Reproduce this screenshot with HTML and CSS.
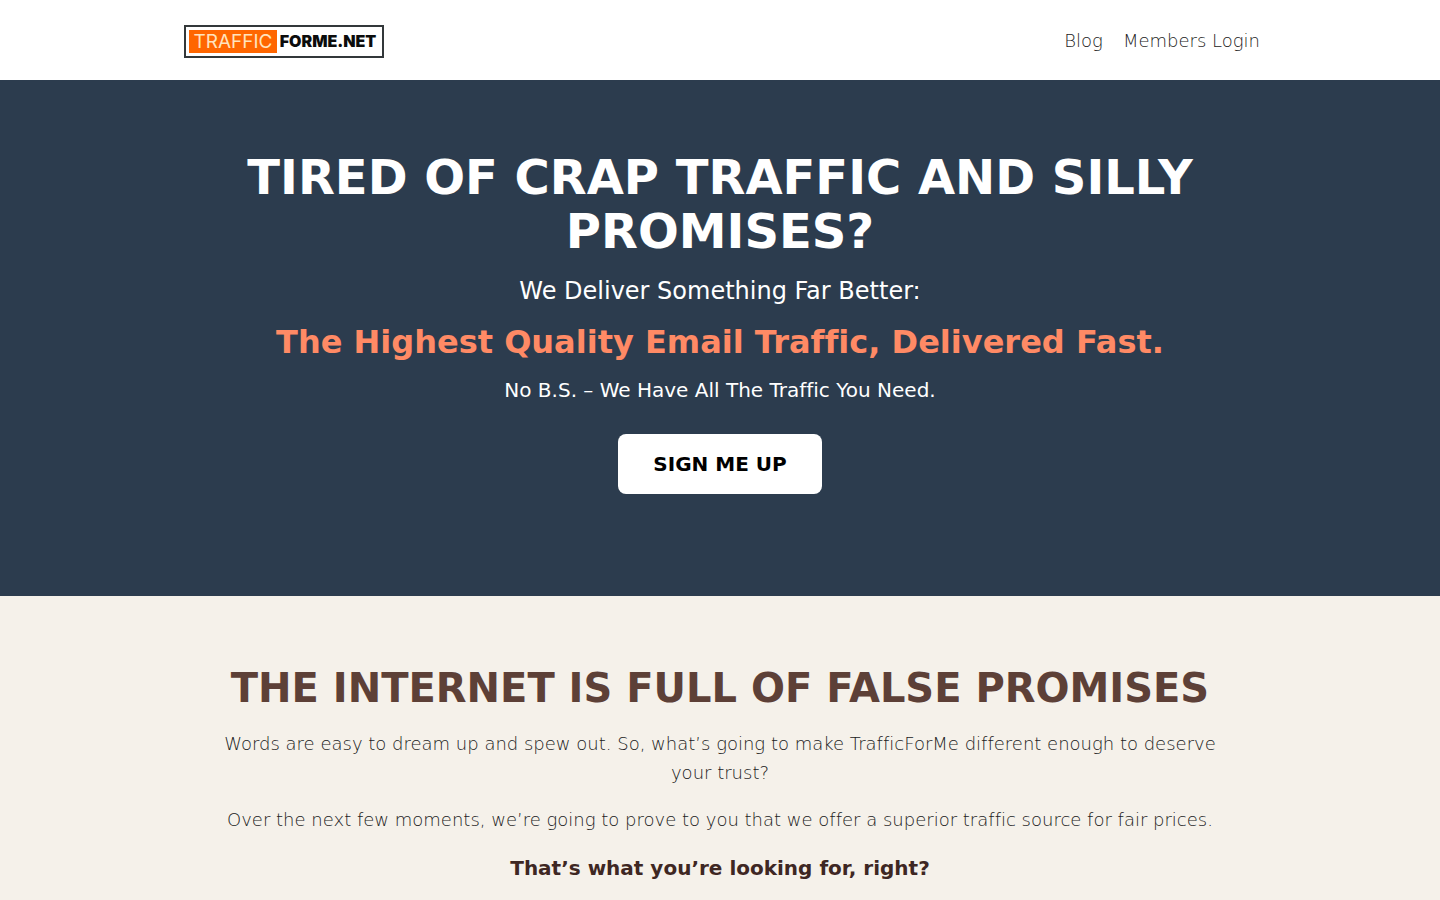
FILE: index.html
```html
<!DOCTYPE html>
<html lang="en">
<head>
<meta charset="utf-8">
<meta name="viewport" content="width=device-width, initial-scale=1">
<title>TrafficForMe</title>
<link rel="stylesheet" href="styles.css">
</head>
<body>
<header class="site-header">
  <div class="header-inner">
    <a class="logo" href="#"><span class="logo-box"><span class="logo-tag">TRAFFIC</span><span class="logo-name">FORME.NET</span></span></a>
    <nav class="site-nav">
      <a href="#">Blog</a>
      <a href="#">Members Login</a>
    </nav>
  </div>
</header>
<main>
  <section class="hero">
    <div class="hero-inner">
      <h1>TIRED OF CRAP TRAFFIC AND SILLY PROMISES?</h1>
      <p class="hero-lead">We Deliver Something Far Better:</p>
      <h2 class="hero-offer">The Highest Quality Email Traffic, Delivered Fast.</h2>
      <p class="hero-note">No B.S. – We Have All The Traffic You Need.</p>
      <button class="cta" type="button">SIGN ME UP</button>
    </div>
  </section>
  <section class="promises">
    <div class="promises-inner">
      <h2>THE INTERNET IS FULL OF FALSE PROMISES</h2>
      <p>Words are easy to dream up and spew out. So, what’s going to make TrafficForMe different enough to deserve your trust?</p>
      <p>Over the next few moments, we’re going to prove to you that we offer a superior traffic source for fair prices.</p>
      <p class="question">That’s what you’re looking for, right?</p>
    </div>
  </section>
</main>
</body>
</html>
```
FILE: styles.css
```css
*{box-sizing:border-box}
body{margin:0;font-family:"DejaVu Sans",sans-serif;font-size:18px;line-height:29px;color:#3e2723;background:#f5f1ea;font-variant-ligatures:none}
h1,h2,p{margin:0}
.site-header{background:#fff}
.header-inner{max-width:1080px;min-height:80px;margin:0 auto;display:flex;align-items:center;justify-content:space-between}
.logo{display:block;padding:2px 4px 0;text-decoration:none}
.logo-box{display:flex;align-items:center;border:2px solid #33383a;padding:3px;height:33px;width:200px;font-family:"Inter",sans-serif;line-height:23px;white-space:nowrap}
.logo-tag{background:#ff6600;color:#ffe3bd;width:88px;text-align:center;font-size:19px}
.logo-name{flex:1;text-align:center;font-size:16px;font-weight:900;color:#0c0c0c}
.site-nav{display:flex;gap:20px}
.site-nav a{color:#222;text-decoration:none;font-weight:200}
.hero{background:#2c3c4e;color:#fff;text-align:center;padding:70px 20px 102px}
.hero-inner,.promises-inner{max-width:1000px;margin:0 auto}
.hero h1{font-size:48px;line-height:54px;font-weight:700}
.hero-lead{font-size:24px;line-height:36px;margin-top:15px}
.hero-offer{font-size:32px;line-height:40px;margin-top:13px;color:#ff8a65}
.hero-note{font-size:20px;line-height:30px;margin-top:13px}
.cta{display:inline-block;margin-top:29px;height:60px;padding:0 35px;border:0;border-radius:8px;background:#fff;color:#000;font:700 20px/30px "DejaVu Sans",sans-serif;cursor:pointer}
.promises{text-align:center;padding:66px 20px}
.promises h2{font-size:40px;line-height:52px;color:#5d4037}
.promises p{font-weight:200;color:#222;margin-top:18px}
.promises h2 + p{margin-top:15px}
.promises .question{font-size:20px;font-weight:700;color:#3e2723;margin-top:20px}
```
